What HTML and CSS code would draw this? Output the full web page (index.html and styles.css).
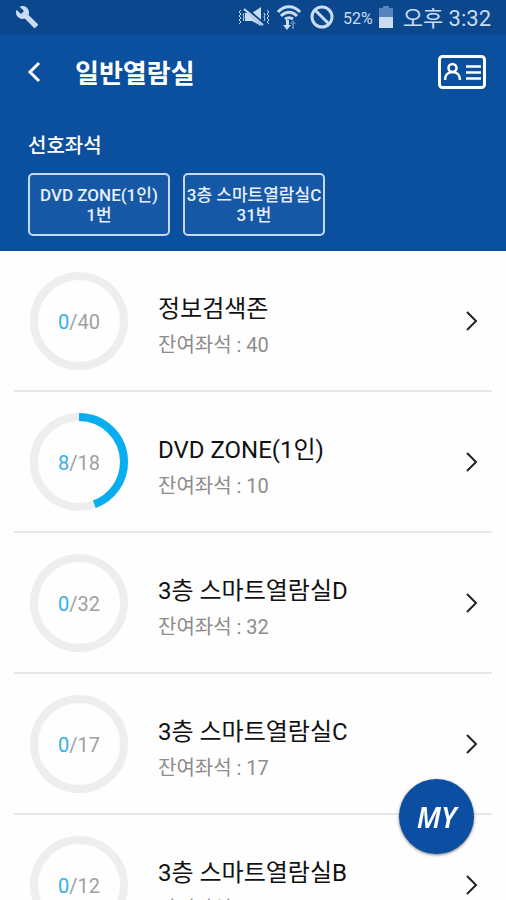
FILE: index.html
```html
<!DOCTYPE html>
<html lang="ko">
<head>
<meta charset="utf-8">
<meta name="viewport" content="width=device-width, initial-scale=1">
<title>일반열람실</title>
<link rel="stylesheet" href="styles.css">
</head>
<body>
<div class="app">
  <header class="top">
    <div class="status">
      <svg class="wrench" width="24" height="24" viewBox="0 0 24 24" aria-hidden="true"><path d="M22.700 19l-9.100-9.100c.9-2.300.4-5-1.500-6.900-2-2-5-2.400-7.400-1.300L9 6 6 9 1.600 4.700C.4 7.100.9 10.100 2.900 12.100c1.900 1.900 4.600 2.400 6.900 1.500l9.100 9.100c.4.400 1 .4 1.400 0l2.300-2.300c.5-.4.5-1.100.1-1.400z"/></svg>
      <div class="indicators">
        <svg width="34" height="22" viewBox="0 0 34 22" aria-hidden="true">
          <path class="line thin" d="M4 4l-2 2 2 2-2 2 2 2-2 2 2 2-2 2M30 4l2 2-2 2 2 2-2 2 2 2-2 2 2 2"/>
          <path class="line thin" d="M7 7l-1 2 1 2-1 2 1 2M27 7l1 2-1 2 1 2-1 2"/>
          <path d="M8 7h7l9-6v19l-9-5H8z"/>
          <path class="gap" d="M9 3l18 16"/>
          <path class="line" d="M7 3l19 16"/>
        </svg>
        <svg width="24" height="26" viewBox="0 0 24 26" aria-hidden="true">
          <path class="line wide" d="M1 8c6-7 16-7 22 0M4 12c5-5 11-5 16 0M8 15c3-2 5-2 8 0"/>
          <path d="M9 16h3v5h2l-4 5-4-5h3z"/><path class="faint" d="M15 25v-5h-2l3-4 3 4h-2v5z"/>
        </svg>
        <svg class="block" width="24" height="24" viewBox="0 0 24 24" aria-hidden="true"><path class="line wide" d="M12 2a10 10 0 1 0 0 20a10 10 0 1 0 0-20M5 5l14 14"/></svg>
        <span class="percent">52%</span>
        <svg width="14" height="22" viewBox="0 0 14 22" aria-hidden="true"><path class="faint" d="M4 0h6v2h4v9H0V2h4z"/><path d="M0 11h14v11H0z"/></svg>
        <span class="clock">오후 3:32</span>
      </div>
    </div>
    <div class="bar">
      <button class="icon-button" type="button" aria-label="뒤로"><svg width="14" height="22" viewBox="0 0 14 22"><path class="stroke" d="M12 2L3 11l9 9"/></svg></button>
      <h1>일반열람실</h1>
      <button class="icon-button" type="button" aria-label="이용증"><svg width="48" height="34" viewBox="0 0 48 34"><rect class="stroke" x="1.500" y="1.500" width="45" height="31" rx="3"/><circle class="stroke fine" cx="14.500" cy="13" r="4"/><path class="stroke fine" d="M7 25c0-5 3-8 7.500-8s7.500 3 7.500 8M28 11.500h15M28 17.500h15M28 23.500h15"/></svg></button>
    </div>
    <section class="favorites">
      <h2>선호좌석</h2>
      <div class="chips">
        <button class="chip" type="button">DVD ZONE(1인)<br>1번</button>
        <button class="chip" type="button">3층 스마트열람실C<br>31번</button>
      </div>
    </section>
  </header>
  <main class="rooms">
    <a class="room" href="#">
      <span class="ring"><svg viewBox="0 0 98 98" aria-hidden="true"><circle class="track" cx="49" cy="49" r="45"/></svg><span class="count"><b>0</b>/40</span></span>
      <span class="info"><span class="name">정보검색존</span><span class="left">잔여좌석 : 40</span></span>
      <svg class="chevron" width="14" height="22" viewBox="0 0 14 22" aria-hidden="true"><path d="M2 2l9 9-9 9"/></svg>
    </a>
    <a class="room" href="#">
      <span class="ring"><svg viewBox="0 0 98 98" aria-hidden="true"><circle class="track" cx="49" cy="49" r="45"/><circle class="used" cx="49" cy="49" r="45" pathLength="18" stroke-dasharray="8 10" transform="rotate(-90 49 49)"/></svg><span class="count"><b>8</b>/18</span></span>
      <span class="info"><span class="name">DVD ZONE(1인)</span><span class="left">잔여좌석 : 10</span></span>
      <svg class="chevron" width="14" height="22" viewBox="0 0 14 22" aria-hidden="true"><path d="M2 2l9 9-9 9"/></svg>
    </a>
    <a class="room" href="#">
      <span class="ring"><svg viewBox="0 0 98 98" aria-hidden="true"><circle class="track" cx="49" cy="49" r="45"/></svg><span class="count"><b>0</b>/32</span></span>
      <span class="info"><span class="name">3층 스마트열람실D</span><span class="left">잔여좌석 : 32</span></span>
      <svg class="chevron" width="14" height="22" viewBox="0 0 14 22" aria-hidden="true"><path d="M2 2l9 9-9 9"/></svg>
    </a>
    <a class="room" href="#">
      <span class="ring"><svg viewBox="0 0 98 98" aria-hidden="true"><circle class="track" cx="49" cy="49" r="45"/></svg><span class="count"><b>0</b>/17</span></span>
      <span class="info"><span class="name">3층 스마트열람실C</span><span class="left">잔여좌석 : 17</span></span>
      <svg class="chevron" width="14" height="22" viewBox="0 0 14 22" aria-hidden="true"><path d="M2 2l9 9-9 9"/></svg>
    </a>
    <a class="room" href="#">
      <span class="ring"><svg viewBox="0 0 98 98" aria-hidden="true"><circle class="track" cx="49" cy="49" r="45"/></svg><span class="count"><b>0</b>/12</span></span>
      <span class="info"><span class="name">3층 스마트열람실B</span><span class="left">잔여좌석 : 12</span></span>
      <svg class="chevron" width="14" height="22" viewBox="0 0 14 22" aria-hidden="true"><path d="M2 2l9 9-9 9"/></svg>
    </a>
  </main>
  <button class="my" type="button">MY</button>
</div>
</body>
</html>
```
FILE: styles.css
```css
* { box-sizing: border-box; }
body { margin: 0; background: #fefefe; font-family: Roboto, "Noto Sans CJK KR", sans-serif; }
button { margin: 0; padding: 0; border: 0; background: none; color: inherit; font: inherit; }
svg { display: block; }
h1, h2 { margin: 0; }

.app { height: 100vh; display: flex; flex-direction: column; }

.top { flex: none; background: #0b4f9f; color: #fff; padding-bottom: 15px; }
.status { height: 34px; padding: 0 15px; display: flex; align-items: center; justify-content: space-between; background: #0b478c; color: #c9dcf4; }
.status svg { fill: #c9dcf4; }
.status .line { fill: none; stroke: #c9dcf4; stroke-width: 2; }
.status .thin { stroke-width: 1; }
.status .wide { stroke-width: 3; }
.status .gap { stroke: #0b478c; stroke-width: 4; }
.status .faint { fill: #5585bb; }
.indicators { display: flex; align-items: center; gap: 6px; }
.block { margin: 0 3px; }
.percent { padding-top: 2px; font-size: 16px; }
.clock { margin-left: 4px; padding-top: 3px; font-size: 22px; line-height: 31px; }

.bar { height: 76px; padding: 0 20px 0 27px; display: flex; align-items: center; }
.bar h1 { flex: 1; margin-left: 34px; padding-top: 4px; font-size: 26px; line-height: 36px; font-weight: 700; }
.stroke { fill: none; stroke: #fff; stroke-width: 3; }
.fine { stroke-width: 2.5; }

.favorites { padding: 22px 28px 0; }
.favorites h2 { font-size: 20px; line-height: 28px; font-weight: 500; }
.chips { display: flex; gap: 13px; margin-top: 13px; }
.chip { min-width: 142px; height: 63px; border: 2px solid #c5d8f2; border-radius: 5px; background: #1658a5; color: #e6effc; font-size: 17px; line-height: 20px; font-weight: 500; white-space: nowrap; }

.rooms { flex: 1; min-height: 0; overflow-y: auto; scrollbar-width: none; padding: 0 14px; }
.room { display: flex; align-items: center; padding: 21px 13px 20px 16px; border-bottom: 2px solid #e8e8e8; color: #111; text-decoration: none; }
.ring { flex: none; width: 98px; height: 98px; display: grid; place-items: center; }
.ring > * { grid-area: 1 / 1; }
.ring svg { width: 100%; }
.track, .used { fill: none; stroke-width: 8; }
.track { stroke: #eee; }
.used { stroke: #06aeef; }
.count { padding-top: 2px; font-size: 20px; color: #a0a0a0; }
.count b { font-weight: 400; color: #35adf0; }
.info { flex: 1; margin-left: 30px; padding-top: 7px; display: flex; flex-direction: column; }
.name { font-size: 24px; line-height: 40px; }
.left { font-size: 20px; line-height: 32px; color: #8c8c8c; }
.chevron path { fill: none; stroke: #222; stroke-width: 2; }

.my { position: fixed; right: 32px; bottom: 46px; width: 75px; height: 75px; border-radius: 50%; background: #0b4ea2; color: #fff; font: italic 600 28px "Noto Sans", sans-serif; box-shadow: 0 1px 3px #0008; }
```
